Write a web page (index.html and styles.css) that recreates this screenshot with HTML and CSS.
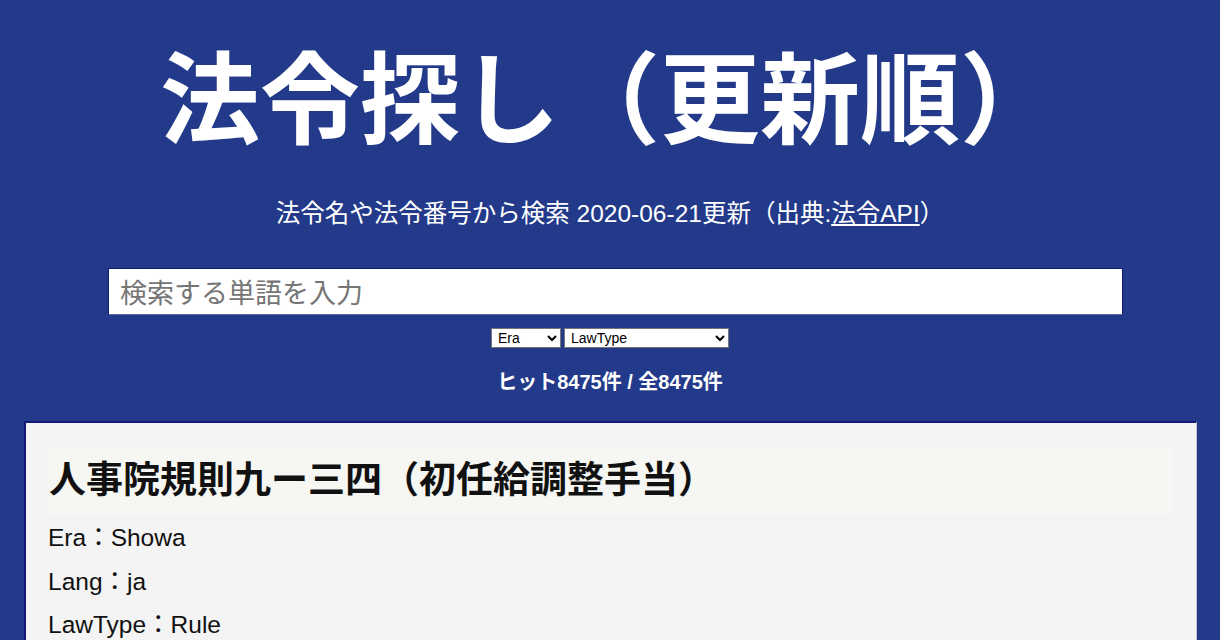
FILE: index.html
```html
<!DOCTYPE html>
<html lang="ja">
<head>
<meta charset="utf-8">
<title>法令探し（更新順）</title>
<link rel="stylesheet" href="styles.css">
</head>
<body>
<header class="hero">
  <h1 class="hero-title">法令探し（更新順）</h1>
  <p class="hero-sub">法令名や法令番号から検索 2020-06-21更新（出典:<a class="hero-link" href="#">法令API</a>）</p>
  <input class="search" type="text" placeholder="検索する単語を入力">
  <div class="filters">
    <select class="sel sel-era"><option>Era</option></select>
    <select class="sel sel-type"><option>LawType</option></select>
  </div>
  <p class="hits">ヒット8475件 / 全8475件</p>
</header>
<main class="list">
  <article class="card">
    <h2 class="card-title">人事院規則九ー三四（初任給調整手当）</h2>
    <p class="field">Era：Showa</p>
    <p class="field">Lang：ja</p>
    <p class="field">LawType：Rule</p>
  </article>
</main>
</body>
</html>
```

FILE: styles.css
```css
html, body {
  margin: 0;
  padding: 0;
}
body {
  background: #233a8a;
  font-family: "Liberation Sans", "Noto Sans CJK JP", sans-serif;
  color: #fff;
  overflow: hidden;
}
.hero {
  display: flex;
  flex-direction: column;
  align-items: center;
}
.hero-title {
  margin: 33px 0 0;
  font-family: "Noto Sans CJK JP", sans-serif;
  font-size: 100px;
  font-weight: 700;
  line-height: 120px;
  letter-spacing: 0;
}
.hero-sub {
  margin: 45px 0 0;
  font-family: "Liberation Sans", "Noto Sans CJK JP", sans-serif;
  font-size: 24.5px;
  line-height: 32px;
}
.hero-link {
  color: #fff;
  text-decoration: underline;
}
.search {
  box-sizing: border-box;
  align-self: flex-start;
  margin: 38px 0 0 108px;
  width: 1015px;
  height: 47px;
  border: 1px solid #101870;
  border-bottom-color: #5a6aa8;
  background: #fff;
  padding: 0 11px;
  font-family: "Noto Sans CJK JP", sans-serif;
  font-size: 27px;
  color: #333;
  outline: none;
}
.search::placeholder {
  color: #757575;
}
.filters {
  display: flex;
  gap: 3px;
  margin-top: 13px;
}
.sel {
  height: 20px;
  font-family: "Liberation Sans", sans-serif;
  font-size: 14px;
  color: #000;
  background: #fff;
  border: 1px solid #767676;
  border-radius: 0;
  padding: 0 2px;
}
.sel-era { width: 70px; }
.sel-type { width: 165px; }
.hits {
  margin: 22px 0 0;
  font-family: "Liberation Sans", "Noto Sans CJK JP", sans-serif;
  font-size: 20px;
  font-weight: 700;
  line-height: 24px;
}
.list {
  margin: 27px 23px 0 24px;
}
.card {
  background: #f4f4f4;
  color: #111;
  border-top: 2px solid #151a78;
  border-left: 2px solid #151a78;
  border-right: 1px solid #c8c8d0;
  padding: 24px 24px 40px 22px;
}
.card-title {
  margin: 0 0 9px;
  background: #f6f6f2;
  font-family: "Liberation Sans", "Noto Sans CJK JP", sans-serif;
  font-size: 37px;
  font-weight: 700;
  line-height: 68px;
  padding: 0 0 0 1px;
  color: #111;
}
.field {
  margin: 0 0 15.5px;
  font-size: 24.5px;
  line-height: 28px;
  color: #111;
}
```
